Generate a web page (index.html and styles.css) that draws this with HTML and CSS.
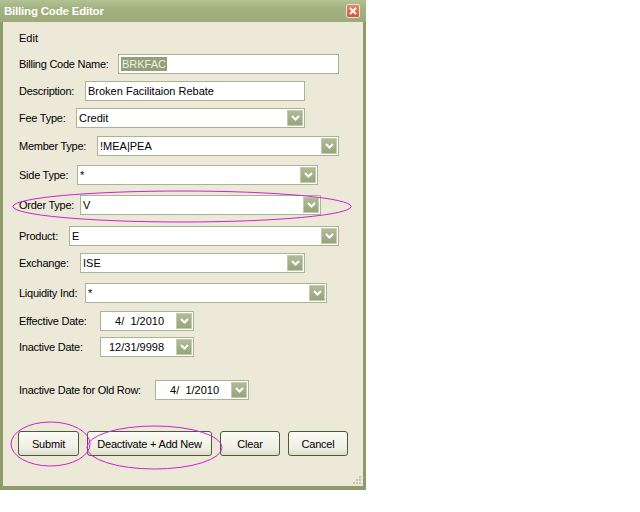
FILE: index.html
```html
<!DOCTYPE html>
<html>
<head>
<meta charset="utf-8">
<link rel="stylesheet" href="styles.css">
</head>
<body>
<div class="window">
  <div class="titlebar">
    <span class="title">Billing Code Editor</span>
    <span class="close"><svg width="8" height="8" viewBox="0 0 8 8"><path d="M1 1L7 7M7 1L1 7" stroke="#fff" stroke-width="1.8"/></svg></span>
  </div>
  <div class="client">
    <div class="heading">Edit</div>

    <div class="row mt9"><span class="lbl lw89">Billing Code Name:</span><span class="field w221"><span class="sel">BRKFAC</span></span></div>
    <div class="row mt7"><span class="lbl lw56">Description:</span><span class="field w220">Broken Facilitaion Rebate</span></div>
    <div class="row mt7"><span class="lbl lw47">Fee Type:</span><span class="field combo w229"><span class="val">Credit</span><span class="drop"><svg width="9" height="6" viewBox="0 0 9 6"><path d="M1 1L4.5 4.5L8 1" fill="none" stroke="#fff" stroke-width="2"/></svg></span></span></div>
    <div class="row mt8"><span class="lbl lw68">Member Type:</span><span class="field combo w242"><span class="val">!MEA|PEA</span><span class="drop"><svg width="9" height="6" viewBox="0 0 9 6"><path d="M1 1L4.5 4.5L8 1" fill="none" stroke="#fff" stroke-width="2"/></svg></span></span></div>
    <div class="row mt9"><span class="lbl lw48">Side Type:</span><span class="field combo w241"><span class="val">*</span><span class="drop"><svg width="9" height="6" viewBox="0 0 9 6"><path d="M1 1L4.5 4.5L8 1" fill="none" stroke="#fff" stroke-width="2"/></svg></span></span></div>
    <div class="row mt10"><span class="lbl lw51">Order Type:</span><span class="field combo w241"><span class="val">V</span><span class="drop"><svg width="9" height="6" viewBox="0 0 9 6"><path d="M1 1L4.5 4.5L8 1" fill="none" stroke="#fff" stroke-width="2"/></svg></span></span></div>
    <div class="row mt11"><span class="lbl lw40">Product:</span><span class="field combo w270"><span class="val">E</span><span class="drop"><svg width="9" height="6" viewBox="0 0 9 6"><path d="M1 1L4.5 4.5L8 1" fill="none" stroke="#fff" stroke-width="2"/></svg></span></span></div>
    <div class="row mt7"><span class="lbl lw51">Exchange:</span><span class="field combo w225"><span class="val">ISE</span><span class="drop"><svg width="9" height="6" viewBox="0 0 9 6"><path d="M1 1L4.5 4.5L8 1" fill="none" stroke="#fff" stroke-width="2"/></svg></span></span></div>
    <div class="row mt10"><span class="lbl lw56">Liquidity Ind:</span><span class="field combo w242"><span class="val">*</span><span class="drop"><svg width="9" height="6" viewBox="0 0 9 6"><path d="M1 1L4.5 4.5L8 1" fill="none" stroke="#fff" stroke-width="2"/></svg></span></span></div>
    <div class="row mt8"><span class="lbl lw71">Effective Date:</span><span class="field combo date"><span class="val">  4/  1/2010</span><span class="drop"><svg width="9" height="6" viewBox="0 0 9 6"><path d="M1 1L4.5 4.5L8 1" fill="none" stroke="#fff" stroke-width="2"/></svg></span></span></div>
    <div class="row mt6"><span class="lbl lw71">Inactive Date:</span><span class="field combo date"><span class="val">12/31/9998</span><span class="drop"><svg width="9" height="6" viewBox="0 0 9 6"><path d="M1 1L4.5 4.5L8 1" fill="none" stroke="#fff" stroke-width="2"/></svg></span></span></div>
    <div class="row mt23"><span class="lbl lw126">Inactive Date for Old Row:</span><span class="field combo date"><span class="val">  4/  1/2010</span><span class="drop"><svg width="9" height="6" viewBox="0 0 9 6"><path d="M1 1L4.5 4.5L8 1" fill="none" stroke="#fff" stroke-width="2"/></svg></span></span></div>

    <div class="buttons">
      <button class="btn b-submit">Submit</button>
      <button class="btn b-deact">Deactivate + Add New</button>
      <button class="btn b-clear">Clear</button>
      <button class="btn b-cancel">Cancel</button>
    </div>
    <div class="grip">
      <svg width="10" height="10" viewBox="0 0 10 10" fill="#c5c2b2"><rect x="7" y="1" width="2" height="2"/><rect x="4" y="4" width="2" height="2"/><rect x="7" y="4" width="2" height="2"/><rect x="1" y="7" width="2" height="2"/><rect x="4" y="7" width="2" height="2"/><rect x="7" y="7" width="2" height="2"/></svg>
    </div>
  </div>
</div>
<svg class="marks" width="640" height="512" viewBox="0 0 640 512">
  <ellipse cx="182" cy="206.5" rx="169" ry="15.5" fill="none" stroke="#d020d0" stroke-width="1"/>
  <ellipse cx="50.5" cy="444" rx="39.5" ry="22" fill="none" stroke="#d020d0" stroke-width="1"/>
  <ellipse cx="154.5" cy="447.5" rx="67.5" ry="21.5" fill="none" stroke="#d020d0" stroke-width="1"/>
</svg>
</body>
</html>
```

FILE: styles.css
```css
html, body {
  margin: 0;
  padding: 0;
  background: #ffffff;
}
body {
  position: relative;
  width: 640px;
  height: 512px;
  overflow: hidden;
  font-family: "Liberation Sans", Arial, sans-serif;
  font-size: 11px;
  color: #000;
}
.window {
  width: 366px;
  height: 490px;
  box-sizing: border-box;
  background: #8e9c6c;
  display: flex;
  flex-direction: column;
  padding: 0 3px 4px 3px;
}
.titlebar {
  height: 22px;
  margin: 0 -3px;
  padding: 0 6px 0 4px;
  background: linear-gradient(#b3c193, #a2b180 40%, #9cab79);
  display: flex;
  align-items: center;
  justify-content: space-between;
}
.title {
  color: #fff;
  font-weight: bold;
  font-size: 11.5px;
  letter-spacing: -0.2px;
}
.close {
  width: 14px;
  height: 14px;
  box-sizing: border-box;
  border: 1px solid #f1e0d6;
  border-radius: 2px;
  background: linear-gradient(#e7876a, #cf5a3a);
  display: flex;
  align-items: center;
  justify-content: center;
}
.client {
  flex: 1;
  background: #ece9d8;
  position: relative;
  padding: 9px 0 0 16px;
  display: flex;
  flex-direction: column;
}
.heading {
  height: 14px;
  line-height: 14px;
}
.row {
  display: flex;
  align-items: center;
  height: 20px;
  gap: 10px;
}
.mt6 { margin-top: 6px; }
.mt7 { margin-top: 7px; }
.mt8 { margin-top: 8px; }
.mt9 { margin-top: 9px; }
.mt10 { margin-top: 10px; }
.mt11 { margin-top: 11px; }
.mt23 { margin-top: 23px; }
.lbl {
  white-space: nowrap;
  letter-spacing: -0.25px;
  flex: none;
}
.lw40 { width: 40px; }
.lw47 { width: 47px; }
.lw48 { width: 48px; }
.lw51 { width: 51px; }
.lw56 { width: 56px; }
.lw68 { width: 68px; }
.lw71 { width: 71px; }
.lw89 { width: 89px; }
.lw126 { width: 126px; }
.field {
  height: 20px;
  box-sizing: border-box;
  border: 1px solid #a9b492;
  background: #fff;
  display: flex;
  align-items: center;
  padding-left: 2px;
  white-space: pre;
  flex: none;
}
.sel {
  background: #939f78;
  color: #eef0e2;
  padding: 0 1px;
  line-height: 14px;
}
.combo {
  justify-content: space-between;
  padding-right: 1px;
}
.val {
  white-space: pre;
}
.drop {
  width: 16px;
  height: 16px;
  box-sizing: border-box;
  border: 1px solid #c3cbae;
  background: linear-gradient(#b0bb96, #98a47c);
  display: flex;
  align-items: center;
  justify-content: center;
}
.w220 { width: 220px; }
.w221 { width: 221px; }
.w225 { width: 225px; }
.w229 { width: 229px; }
.w241 { width: 241px; }
.w242 { width: 242px; }
.w270 { width: 270px; }
.date {
  width: 94px;
  padding-left: 8px;
}
.buttons {
  margin-top: 31px;
  display: flex;
  gap: 8px;
  margin-left: -1px;
}
.btn {
  height: 25px;
  box-sizing: border-box;
  border: 1px solid #4d5a3a;
  border-radius: 3px;
  background: linear-gradient(#fbfbf6, #f0efe4 70%, #dedccb);
  font-family: "Liberation Sans", Arial, sans-serif;
  font-size: 11px;
  color: #000;
  padding: 0;
  letter-spacing: -0.2px;
}
.b-submit { width: 61px; }
.b-deact { width: 125px; }
.b-clear { width: 60px; }
.b-cancel { width: 60px; }
.grip {
  position: absolute;
  right: 1px;
  bottom: 1px;
  line-height: 0;
}
.marks {
  position: absolute;
  left: 0;
  top: 0;
  pointer-events: none;
}
```
